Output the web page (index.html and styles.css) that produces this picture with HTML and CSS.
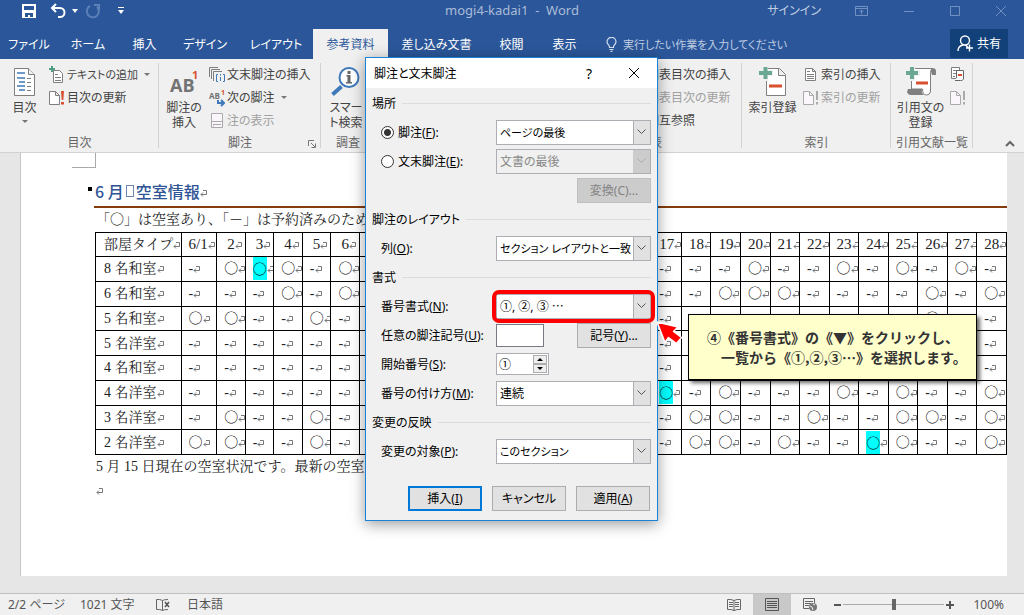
FILE: index.html
```html
<!DOCTYPE html>
<html lang="ja">
<head>
<meta charset="utf-8">
<title>mogi4-kadai1 - Word</title>
<link rel="stylesheet" href="styles.css">
</head>
<body>
<header class="titlebar">
  <div class="quick">
    <button class="bare" aria-label="上書き保存"><svg width="16" height="16" viewBox="0 0 16 16"><path fill="#fff" fill-rule="evenodd" d="M1 1h14v14H1zM3 3v4h10V3zM4 10v4h3v-2h2v2h3v-4z"/></svg></button>
    <button class="bare" aria-label="元に戻す"><svg width="16" height="16" viewBox="0 0 16 16"><path fill="none" stroke="#fff" stroke-width="2" d="M2 5h8a4 4 0 0 1 0 9H8M6 1L2 5l4 4"/></svg></button>
    <button class="bare caret-white" aria-label="元に戻すの一覧"><svg width="6" height="4"><path fill="#fff" d="M0 0h6L3 4z"/></svg></button>
    <button class="bare redo" aria-label="やり直し"><svg width="16" height="16" viewBox="0 0 16 16"><path fill="none" stroke="#5c80b8" stroke-width="2" d="M5 3a6 6 0 1 0 7 1M9 2h5v5"/></svg></button>
    <button class="bare more" aria-label="カスタマイズ"><svg width="6" height="8"><path fill="#fff" d="M0 0h6v1H0zM0 3h6L3 7z"/></svg></button>
  </div>
  <div class="doc-name">mogi4-kadai1&nbsp; -&nbsp; Word</div>
  <div class="window-tools">
    <a href="#" class="signin">サインイン</a>
    <button class="bare" aria-label="リボンの表示オプション"><svg width="14" height="12"><path fill="none" stroke="#7191c2" d="M.5 1.500h12v9H.5zM.5 3.500h12M6.500 9.500V5M4.500 7l2-2 2 2"/></svg></button>
    <button class="bare" aria-label="最小化"><svg width="12" height="12"><path stroke="#7191c2" d="M1 6.500h10"/></svg></button>
    <button class="bare" aria-label="最大化"><svg width="12" height="12"><path fill="none" stroke="#7191c2" d="M1.500 1.500h9v9h-9z"/></svg></button>
    <button class="bare" aria-label="閉じる"><svg width="12" height="12"><path fill="none" stroke="#7191c2" d="M1 1l10 10M11 1L1 11"/></svg></button>
  </div>
</header>

<nav class="tabs">
  <button class="tab">ファイル</button>
  <button class="tab">ホーム</button>
  <button class="tab">挿入</button>
  <button class="tab">デザイン</button>
  <button class="tab">レイアウト</button>
  <button class="tab active">参考資料</button>
  <button class="tab">差し込み文書</button>
  <button class="tab">校閲</button>
  <button class="tab">表示</button>
  <button class="tell kana"><svg width="11" height="15" viewBox="0 0 11 15"><path fill="none" stroke="#d5dfee" stroke-width="1.200" d="M3.500 10.500V9.500C3 8 1 7 1 4.800a4.300 4.300 0 0 1 9 0C10 7 8 8 7.500 9.500v1zM3.500 12.500h4M4.500 14.300h2"/></svg>実行したい作業を入力してください</button>
  <button class="share"><svg width="17" height="17" viewBox="0 0 17 17"><path fill="none" stroke="#fff" stroke-width="1.400" d="M1 16c0-4 2.500-5.500 5-6M8 1a4.200 4.200 0 1 1 0 9 4.200 4.200 0 1 1 0-9zM8.500 10l3 3M12.500 9.500v7M9 13h7"/></svg>共有</button>
</nav>

<section class="ribbon">
  <div class="group g-toc">
    <div class="tools">
      <button class="large"><svg width="22" height="32" viewBox="0 0 22 32"><path fill="#fff" stroke="#7f7f7f" d="M.5 1.500h14l6 6v21H.5z"/><path fill="#f0f0f0" stroke="#7f7f7f" d="M14.500 1.500v6h6"/><path stroke="#3f79b9" stroke-width="1.500" d="M3 6h8M3 11h8M5 15h6M3 19h8M5 23h6"/><path stroke="#7f7f7f" d="M13 11.500h4M13 15.500h4M13 19.500h4M13 23.500h4"/></svg><span>目次</span><svg class="drop" width="6" height="4"><path d="M0 0h6L3 3z"/></svg></button>
      <div class="small-list">
        <button class="small kana"><svg width="16" height="18" viewBox="0 0 16 18"><path fill="#fff" stroke="#7f7f7f" d="M4.500 4.500h6l3 3v9h-9z"/><path stroke="#7f7f7f" d="M6 8.500h3M6 11.500h6M6 14.500h6"/><path stroke="#4f9d84" stroke-width="2" d="M3 0v6M0 3h6"/></svg>テキストの追加<svg class="drop" width="6" height="4"><path d="M0 0h6L3 3z"/></svg></button>
        <button class="small"><svg width="16" height="18" viewBox="0 0 16 18"><path fill="#fff" stroke="#7f7f7f" d="M.5 2.500h6l4 4v9H.5zM6.500 2.500v4h4"/><path fill="#d8502f" d="M12 2h3l-.7 9h-1.600zM12 13h3v2.500h-3z"/></svg>目次の更新</button>
      </div>
    </div>
    <div class="caption">目次</div>
  </div>
  <div class="group g-note">
    <div class="tools">
      <button class="large"><svg width="28" height="32" viewBox="0 0 28 32"><text x="0" y="25" class="ab">AB</text><text x="22" y="12" class="sup">1</text></svg><span>脚注の<br>挿入</span></button>
      <div class="small-list">
        <button class="small"><svg width="16" height="18" viewBox="0 0 16 18"><path fill="none" stroke="#7f7f7f" d="M.5 11V1.500H9M2.500 13V3.500H11M4.500 15V5.500H13"/><path fill="none" stroke="#3f79b9" d="M9 8.500H7.500v7H9M14 8.500h1.500v7H14M11.500 8v1.500M11.500 11v4"/></svg>文末脚注の挿入</button>
        <button class="small"><svg width="16" height="18" viewBox="0 0 16 18"><text x="0" y="10" class="ab tiny">AB</text><text x="12" y="6" class="sup tiny">1</text><path fill="none" stroke="#3f79b9" stroke-width="2" d="M9 11v3h5M12 11l3 3-3 3"/></svg>次の脚注<svg class="drop" width="6" height="4"><path d="M0 0h6L3 3z"/></svg></button>
        <button class="small" disabled><svg width="16" height="18" viewBox="0 0 16 18"><path fill="#fbf6fb" stroke="#aaa" d="M2.500 1.500h11v14h-11z"/><path stroke="#aaa" d="M2 9.500h12M4 12.500h8M4 14h1"/></svg>注の表示</button>
      </div>
    </div>
    <div class="caption">脚注</div>
    <button class="launcher" aria-label="脚注と文末脚注"><svg width="8" height="8"><path fill="none" stroke="#777" d="M.5 6V.5H6M3 3l4 4M7.500 3.500v4h-4"/></svg></button>
  </div>
  <div class="group g-search">
    <div class="tools">
      <button class="large"><svg width="30" height="32" viewBox="0 0 30 32"><path stroke="#3f79b9" stroke-width="4" d="M1.500 27.500l9-8"/><circle cx="18" cy="10.500" r="9.500" fill="#fff" stroke="#3f79b9" stroke-width="2"/><path fill="#666" d="M16.500 4h3v3h-3zM15.500 8h4v7h1.500v1.500h-6V15h1.500V9.500h-1z"/></svg><span>スマー<br>ト検索</span></button>
    </div>
    <div class="caption">調査</div>
  </div>
  <div class="group g-fig">
    <div class="tools">
      <div class="small-list">
        <button class="small">図表目次の挿入</button>
        <button class="small" disabled>図表目次の更新</button>
        <button class="small">相互参照</button>
      </div>
    </div>
    <div class="caption">図表</div>
  </div>
  <div class="group g-index">
    <div class="tools">
      <button class="large"><svg width="30" height="32" viewBox="0 0 30 32"><path fill="#fff" stroke="#7f7f7f" d="M8.500 1.500h13l6 6v21h-19z"/><path fill="#f0f0f0" stroke="#7f7f7f" d="M20.500 1.500v7h7"/><path stroke="#f0f0f0" stroke-width="6" d="M7 0v14M1 6h14"/><path stroke="#6aa893" stroke-width="4" d="M7.500 0v12M1 6h13"/><path stroke="#d8502f" stroke-width="3" d="M11 19h13"/></svg><span>索引登録</span></button>
      <div class="small-list">
        <button class="small"><svg width="16" height="18" viewBox="0 0 16 18"><path fill="#fff" stroke="#7f7f7f" d="M2.500 2.500h7l3 3v9h-10zM9.500 2.500v3h3"/><path stroke="#7f7f7f" d="M4 5.500h3M4 8.500h7M4 10.500h7M4 12.500h7"/></svg>索引の挿入</button>
        <button class="small" disabled><svg width="16" height="18" viewBox="0 0 16 18"><path fill="#fbf6fb" stroke="#aaa" d="M.5 2.500h6l4 4v9H.5zM6.500 2.500v4h4"/><path fill="#aaa" d="M13 2h2v9h-2zM13 13h2v2.500h-2z"/></svg>索引の更新</button>
      </div>
    </div>
    <div class="caption">索引</div>
  </div>
  <div class="group g-cite">
    <div class="tools">
      <button class="large"><svg width="32" height="32" viewBox="0 0 32 32"><path fill="#7f7f7f" d="M25 1h2q4 0 4 3v4h-4zM3 22h14q-1 6 4 6H6q-3 0-4-3z"/><path fill="#fff" stroke="#7f7f7f" d="M6.500 22V1.500h21q-2 1-2 4V25q-1 3-4 3-4 0-4-6z"/><path stroke="#f0f0f0" stroke-width="6" d="M7 0v14M1 6h14"/><path stroke="#6aa893" stroke-width="4" d="M7 0v12M1 6h12"/><path stroke="#d8502f" stroke-width="3" d="M11 16h12"/></svg><span>引用文の<br>登録</span></button>
      <div class="small-list">
        <button class="small" aria-label="資料文献の管理"><svg width="16" height="18" viewBox="0 0 16 18"><path fill="#fff" stroke="#7f7f7f" d="M1.500 1.500h8v11h-8z"/><path stroke="#7f7f7f" d="M3 4.500h5M3 7.500h3M3 10.500h2"/><path fill="#fff" stroke="#666" d="M6.500 12V4.500h7V13q-1 2-3 1.500H5"/><path stroke="#d8502f" stroke-width="2" d="M8 9h4"/></svg></button>
        <button class="small" aria-label="文献目録の更新" disabled><svg width="16" height="18" viewBox="0 0 16 18"><path fill="#fbf6fb" stroke="#aaa" d="M.5 2.500h6l4 4v9H.5zM6.500 2.500v4h4"/><path fill="#aaa" d="M13 2h2v9h-2zM13 13h2v2.500h-2z"/></svg></button>
      </div>
    </div>
    <div class="caption">引用文献一覧</div>
  </div>
  <button class="collapse" aria-label="リボンを折りたたむ"><svg width="10" height="7"><path fill="none" stroke="#666" stroke-width="2" d="M1 6l4-4 4 4"/></svg></button>
</section>

<main class="workspace">
  <article class="page">
    <div class="crop"></div>
    <h1 class="heading">6 月<span class="space-mark"></span>空室情報<i class="ret"></i></h1>
    <p class="para">「<span class="circle">○</span>」は空室あり、「－」は予約済みのため</p>
    <table class="rooms">
      <colgroup id="cols"></colgroup>
      <thead><tr id="days"></tr></thead>
      <tbody id="rooms"></tbody>
    </table>
    <p class="para">5 月 15 日現在の空室状況です。最新の空室</p>
    <p class="para"><i class="ret"></i></p>
  </article>
</main>

<footer class="status">
  <span class="pages">2/2 ページ</span>
  <span class="words">1021 文字</span>
  <button class="bare proof" aria-label="文章校正"><svg width="16" height="14"><path fill="none" stroke="#666" d="M7.500 12V2.500Q5 1 1.500 1.500v10Q5 11 7.500 12.500 9 11.500 13 11.500M7.500 2.500Q9 1.500 13 1.500"/><path stroke="#555" stroke-width="1.500" d="M10 4l4 5M14 4l-4 5"/></svg></button>
  <span>日本語</span>
  <div class="views">
    <button class="bare view" aria-label="閲覧モード"><svg width="14" height="14"><path fill="none" stroke="#666" d="M7 13V2.500Q4 1 .500 1.500v10Q4 11 7 12.500 10 11 13.500 11.500v-10Q10 1 7 2.500M2 4.500h4M2 6.500h4M2 8.500h4M8 4.500h4M8 6.500h4M8 8.500h4"/></svg></button>
    <button class="bare view on" aria-label="印刷レイアウト"><svg width="14" height="14"><path fill="none" stroke="#555" d="M.5.5h13v12H.5zM2 3.500h10M2 5.500h10M2 7.500h10M2 9.500h10"/></svg></button>
    <button class="bare view" aria-label="Web レイアウト"><svg width="14" height="14"><path fill="none" stroke="#666" d="M6 10.500H.5v-10h11V5M2 3.500h8M2 5.500h6M2 7.500h4"/><circle cx="10" cy="9" r="4" fill="#777"/><path fill="none" stroke="#eee" d="M7 8l2 1 1 3M10 6l2 1"/></svg></button>
    <button class="bare sign" aria-label="縮小"><svg width="7" height="8"><path stroke="#555" stroke-width="2" d="M0 4h7"/></svg></button>
    <input class="zoom" type="range" min="0" max="100" value="50" aria-label="ズーム">
    <button class="bare sign" aria-label="拡大"><svg width="8" height="8"><path stroke="#555" stroke-width="2" d="M0 4h8M4 0v8"/></svg></button>
    <span class="percent">100%</span>
  </div>
</footer>

<form class="dialog" role="dialog" aria-label="脚注と文末脚注">
  <div class="dialog-title"><span>脚注と文末脚注</span><button type="button" class="bare" aria-label="ヘルプ">?</button><button type="button" class="bare" aria-label="閉じる"><svg width="12" height="12"><path fill="none" stroke="#000" d="M1 1l10 10M11 1L1 11"/></svg></button></div>
  <div class="section">場所</div>
  <div class="field">
    <label class="choice"><input type="radio" name="place" checked><span>脚注(<u>F</u>):</span></label>
    <select class="kana" aria-label="脚注の場所"><option>ページの最後</option></select>
  </div>
  <div class="field">
    <label class="choice"><input type="radio" name="place"><span>文末脚注(<u>E</u>):</span></label>
    <select aria-label="文末脚注の場所" disabled><option>文書の最後</option></select>
  </div>
  <div class="field end"><button type="button" class="push" disabled>変換(C)...</button></div>
  <div class="section">脚注のレイアウト</div>
  <div class="field"><label for="columns">列(<u>O</u>):</label><select class="kana" id="columns"><option>セクション レイアウトと一致</option></select></div>
  <div class="section">書式</div>
  <div class="field"><label for="format">番号書式(<u>N</u>):</label><div class="marked"><select id="format"><option>①, ②, ③ ⋯</option></select></div></div>
  <div class="field"><label for="custom">任意の脚注記号(<u>U</u>):</label><div class="pair"><input id="custom" class="box" type="text"><button type="button" class="push">記号(<u>Y</u>)...</button></div></div>
  <div class="field"><label for="start">開始番号(<u>S</u>):</label><div class="spin"><input id="start" type="text" value="①"><div class="steps"><button type="button" aria-label="増やす"><svg width="6" height="3"><path d="M0 3h6L3 0z"/></svg></button><button type="button" aria-label="減らす"><svg width="6" height="3"><path d="M0 0h6L3 3z"/></svg></button></div></div></div>
  <div class="field"><label for="numbering">番号の付け方(<u>M</u>):</label><select id="numbering"><option>連続</option></select></div>
  <div class="section">変更の反映</div>
  <div class="field"><label for="target">変更の対象(<u>P</u>):</label><select class="kana" id="target"><option>このセクション</option></select></div>
  <div class="actions"><button type="button" class="push primary">挿入(<u>I</u>)</button><button type="button" class="push">キャンセル</button><button type="button" class="push">適用(<u>A</u>)</button></div>
</form>

<svg class="pointer" width="30" height="28" viewBox="0 0 30 28"><path fill="#f00" stroke="#fff" stroke-width="1.500" stroke-linejoin="round" d="M2 3l21 5-4.500 4.500 8 6-5 6-8-6-3.500 5z"/></svg>
<aside class="callout"><p>④《番号書式》の《▼》をクリックし、</p><p class="second">一覧から《①,②,③…》を選択します。</p></aside>
<script src="script.js"></script>
</body>
</html>
```

FILE: styles.css
```css
* { box-sizing: border-box; }

body {
  margin: 0;
  min-height: 100vh;
  display: flex;
  flex-direction: column;
  position: relative;
  overflow: hidden;
  background: #e6e6e6;
  color: #444;
  font: 12px/15px "Noto Sans", "Noto Sans CJK JP", sans-serif;
  font-feature-settings: "palt";
}

button, select, input { font: inherit; color: inherit; font-feature-settings: inherit; }
button { margin: 0; padding: 0; border: 0; background: none; white-space: nowrap; }
svg { flex: none; }
.bare { display: flex; align-items: center; justify-content: center; }
.kana { font-size: 11px; }

/* title bar */
.titlebar {
  display: grid;
  grid-template-columns: 1fr auto 1fr;
  align-items: center;
  height: 29px;
  padding-bottom: 8px;
  background: #2b579a;
}
.quick { display: flex; align-items: center; padding-left: 21px; gap: 13px; }
.quick .caret-white { margin-left: -7px; }
.quick .redo { margin-left: -6px; }
.quick .more { margin-left: 4px; }
.doc-name { font-size: 13px; color: #aabbd7; }
.window-tools { display: flex; align-items: center; justify-content: flex-end; gap: 34px; padding-right: 17px; }
.signin { color: #c0cde2; text-decoration: none; }

/* tabs */
.tabs {
  display: grid;
  grid-template-columns: 58px 60px 53px 68px 74px 75px 97px 53px 53px 1fr 58px;
  height: 30px;
  padding-right: 16px;
  background: #2b579a;
  color: #fff;
}
.tab.active { background: #f0f0f0; color: #2b579a; }
.tell { display: flex; align-items: center; gap: 6px; padding-left: 15px; color: #c0cde2; }
.share { display: flex; align-items: center; justify-content: center; gap: 3px; height: 29px; background: #124078; }

/* ribbon */
.ribbon { display: flex; height: 94px; background: #f0f0f0; border-bottom: 1px solid #d2d2d2; }
.group { position: relative; display: flex; flex-direction: column; justify-content: space-between; padding-top: 4px; }
.group::after { content: ""; position: absolute; right: 0; top: 4px; bottom: 4px; width: 1px; background: #d2d2d2; }
.tools { display: flex; height: 69px; }
.caption { height: 20px; line-height: 22px; color: #666; text-align: center; }
.large { display: flex; flex-direction: column; align-items: center; padding-top: 4px; width: 50px; }
.large span { padding-top: 1px; }
.large .drop { margin-top: 5px; }
.small-list { display: grid; grid-auto-rows: 23px; justify-items: start; }
.small { display: flex; align-items: center; gap: 2px; }
.small .drop { margin-left: 4px; }
.small:disabled { color: #a0a0a0; }
.drop { fill: #777; }
.g-toc { width: 159px; }
.g-toc .large { width: 49px; }
.g-note { width: 162px; }
.g-search { width: 54px; }
.g-fig { width: 184px; margin-left: auto; }
.g-fig .tools { padding-left: 89px; }
.g-index { width: 149px; }
.g-index .large { width: 61px; }
.g-cite { width: 82px; }
.g-cite .large { width: 59px; }
.collapse { align-self: flex-end; width: 51px; height: 19px; padding-left: 22px; }
.launcher { position: absolute; right: 5px; bottom: 4px; display: flex; }
.ab { font: bold 18px "Open Sans", sans-serif; fill: #737373; }
.sup { font: bold 11px "Open Sans", sans-serif; fill: #d8502f; }
.ab.tiny { font-size: 8px; }
.sup.tiny { font-size: 7px; }

/* document */
.workspace { flex: 1; padding: 0 17px 17px 20px; }
.page {
  min-height: 423px;
  height: 100%;
  padding-left: 74px;
  background: #fff;
  border-left: 1px solid #c6c6c6;
  color: #222;
  font: 14px/24px "Liberation Serif", "Noto Serif CJK JP", "Noto Sans CJK JP", serif;
  font-feature-settings: normal;
}
.crop { width: 24px; height: 15px; margin-left: -23px; border: solid #aaa; border-width: 0 1px 1px 0; }
.heading {
  display: flex;
  align-items: center;
  position: relative;
  margin: 0 0 0 -1px;
  padding: 8px 0 1px 1px;
  height: 40px;
  border-bottom: 2px solid #843c0c;
  color: #2f5496;
  font: 500 16px/24px "Noto Sans CJK JP", sans-serif;
}
.heading::before { content: ""; position: absolute; left: -6px; top: 19px; width: 4px; height: 4px; background: #000; }
.heading .ret { margin-top: 6px; }
.space-mark { width: 8px; height: 12px; margin: 0 2px; border: 1px solid #6f86b0; }
.para { margin: 0; padding-left: 1px; white-space: nowrap; }
.circle { font-family: "Noto Sans CJK JP", sans-serif; line-height: 0; color: #000; }
.ret {
  display: inline-block;
  width: 7px;
  height: 7px;
  background: url("data:image/svg+xml,%3Csvg xmlns='http://www.w3.org/2000/svg' width='7' height='7'%3E%3Cpath fill='none' stroke='%23777' d='M3 .5h3.500v4H1M3 2.500l-2 2 2 2'/%3E%3C/svg%3E") no-repeat;
}
.rooms { width: 100%; height: 223px; border-collapse: collapse; table-layout: fixed; }
.rooms th, .rooms td {
  padding: 0 0 0 7px;
  border: 1px solid #000;
  font-weight: 400;
  font-size: 14px;
  line-height: 23px;
  text-align: left;
  white-space: nowrap;
  overflow: hidden;
}
.rooms .single { padding-left: 10px; }
.rooms thead th { font-size: 15px; }
.rooms tr > :first-child { padding-left: 8px; font-size: 14px; }
.rooms .hit { display: inline-block; line-height: 23px; vertical-align: top; background: #0ff; }
.c-name { width: 84px; }
.c-first { width: 35px; }
.c-narrow { width: 28px; }
.c-wide { width: 29px; }

/* status bar */
.status {
  display: flex;
  align-items: center;
  height: 22px;
  padding: 0 20px 0 8px;
  background: #f0f0f0;
  border-top: 1px solid #c0c0c0;
  color: #555;
}
.pages { width: 72px; }
.words { width: 75px; }
.proof { margin-right: 16px; }
.views { display: flex; align-items: center; align-self: stretch; margin-left: auto; }
.view { width: 38px; align-self: stretch; }
.view.on { background: #c8c8c8; }
.sign { margin: 0 2px; }
.view + .sign { margin-left: 5px; }
.percent { margin-left: 17px; }
.zoom { width: 101px; margin: 0; height: 14px; appearance: none; background: linear-gradient(#aaa, #aaa) center / 100% 1px no-repeat; }
.zoom::-webkit-slider-thumb { appearance: none; width: 4px; height: 11px; background: #666; }

/* dialog */
.dialog {
  position: absolute;
  left: 365px;
  top: 57px;
  width: 293px;
  background: #f0f0f0;
  border: 1px solid #1883d7;
  box-shadow: 0 3px 14px rgba(0, 0, 0, 0.4);
  color: #000;
}
.dialog-title { display: flex; align-items: center; height: 30px; padding: 0 17px 0 8px; gap: 36px; background: #fff; }
.dialog-title span { flex: 1; }
.dialog-title button { font-size: 14px; }
.section { display: flex; align-items: center; gap: 6px; height: 29px; padding: 2px 6px 0; }
.section::after { content: ""; flex: 1; height: 1px; background: #dcdcdc; }
.field { display: grid; grid-template-columns: 1fr 155px; align-items: center; height: 29px; padding: 1px 6px 0 15px; white-space: nowrap; }
.choice { display: flex; align-items: center; gap: 4px; }
.choice input {
  appearance: none;
  width: 13px;
  height: 13px;
  margin: 0;
  border: 1px solid #333;
  border-radius: 50%;
  background: #fff;
}
.choice input:checked { background: radial-gradient(circle, #333 0 3px, #fff 4px); }
select {
  appearance: none;
  width: 100%;
  height: 25px;
  padding: 0 18px 0 3px;
  border: 1px solid #adadb3;
  border-radius: 0;
  background:
    url("data:image/svg+xml,%3Csvg xmlns='http://www.w3.org/2000/svg' width='9' height='6'%3E%3Cpath fill='none' stroke='%23555' d='M.5 .5l4 4 4-4'/%3E%3C/svg%3E") right 4px center no-repeat,
    linear-gradient(to right, #adadb3 1px, #e1e1e1 1px) right / 17px 100% no-repeat,
    #fff;
}
select.kana { font-size: 11px; }
select:disabled {
  color: #888;
  opacity: 1;
  background:
    url("data:image/svg+xml,%3Csvg xmlns='http://www.w3.org/2000/svg' width='9' height='6'%3E%3Cpath fill='none' stroke='%23aaa' d='M.5 .5l4 4 4-4'/%3E%3C/svg%3E") right 4px center no-repeat,
    linear-gradient(#ccc, #ccc) right / 17px 100% no-repeat,
    #f0f0f0;
}
.push { width: 74px; height: 25px; border: 1px solid #adadad; background: #e1e1e1; }
.push:disabled { background: #ccc; border-color: #bfbfbf; color: #838383; }
.push.primary { border: 2px solid #0078d7; }
.end { justify-items: end; grid-template-columns: 1fr; }
.marked { position: relative; }
.marked::after { content: ""; position: absolute; inset: -4px; border: 4px solid #f00; border-radius: 7px; pointer-events: none; }
.pair { display: flex; justify-content: space-between; align-items: center; }
.box { width: 48px; height: 23px; border: 1px solid #7a7a85; background: #fff; }
.spin { display: flex; width: 53px; height: 22px; border: 1px solid #adadb3; background: #fff; }
.spin input { flex: 1; min-width: 0; padding: 0 2px; border: 0; background: none; }
.steps { display: grid; grid-template-rows: 1fr 1fr; width: 16px; padding: 1px; }
.steps button { display: flex; align-items: center; justify-content: center; border: 1px solid #adadad; background: #eee; }
.actions { display: flex; justify-content: flex-end; gap: 10px; padding: 21px 7px 9px; }

/* annotation */
.pointer { position: absolute; left: 655px; top: 319px; }
.callout {
  position: absolute;
  left: 688px;
  top: 314px;
  width: 289px;
  padding: 12px 0 12px 18px;
  border: 1px solid #000;
  background: #ffc;
  box-shadow: 3px 3px 4px rgba(0, 0, 0, 0.6);
  color: #333;
  font: bold 14px/20px "Noto Sans CJK JP", sans-serif;
  font-feature-settings: normal;
  white-space: nowrap;
}
.callout p { margin: 0; }
.callout .second { padding-left: 14px; }
```

FILE: script.js
```js
// One character per day: o = vacant, O = vacant and highlighted, - = booked, . = not filled in.
const rooms = [
  ["8 名和室", "-oOo-o..........---o--o-o-o-"],
  ["6 名和室", "---o-o..........--ooo----o-o"],
  ["5 名和室", "oo--o-..........-........o.-"],
  ["5 名洋室", "------..........-..........-"],
  ["4 名和室", "------..........-......O...-"],
  ["4 名洋室", "------..........O-o---o-o--o"],
  ["3 名洋室", "-o--o-..........-oo--o--oo-o"],
  ["2 名洋室", "oo--o-..........-oo-o--Oo--o"]
];
const ret = '<i class="ret"></i>';
const marks = {
  "o": `<span class="circle">○</span>${ret}`,
  "O": `<span class="circle hit">○</span>${ret}`,
  "-": `-${ret}`,
  ".": ""
};

let cols = '<col class="c-name"><col class="c-first">';
let head = `<th>部屋タイプ${ret}</th><th>6/1${ret}</th>`;
for (let day = 2; day <= 28; day++) {
  cols += `<col class="${day < 10 ? "c-narrow" : "c-wide"}">`;
  const shown = day < 7 || day > 16;
  head += `<th class="${day < 10 ? "single" : ""}">${shown ? day + ret : ""}</th>`;
}
document.getElementById("cols").innerHTML = cols;
document.getElementById("days").innerHTML = head;
document.getElementById("rooms").innerHTML = rooms.map(([name, days]) =>
  `<tr><th>${name}${ret}</th>${[...days].map(d => `<td>${marks[d]}</td>`).join("")}</tr>`
).join("");
```
